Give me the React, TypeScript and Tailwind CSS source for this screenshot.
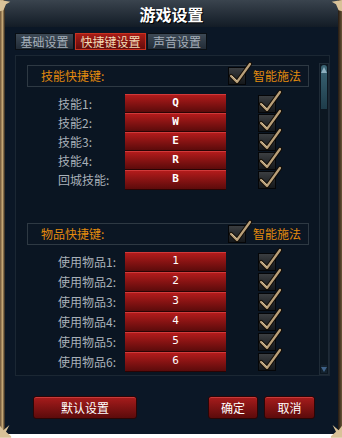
import React from "react";

function Check() {
  return (
    <div className="relative w-[18px] h-[18px] shrink-0 border border-[#050608] bg-gradient-to-b from-[#3b3e41] to-[#15181b]">
      <svg
        className="absolute left-[-3px] top-[-9px] overflow-visible"
        width="28"
        height="28"
        viewBox="0 0 28 28"
      >
        <path d="M5 17 L11 23 L24 5" fill="none" stroke="#120c05" strokeWidth="4.2" strokeLinecap="round" strokeLinejoin="round" />
        <path d="M5 17 L11 23 L24 5" fill="none" stroke="#b9a07a" strokeWidth="2.2" strokeLinecap="round" strokeLinejoin="round" />
        <path d="M6 17 L11 21.8" fill="none" stroke="#dcc8a2" strokeWidth="0.9" strokeLinecap="round" />
      </svg>
    </div>
  );
}

function Row({ label, k, h, mono }: { label: string; k: string; h: string; mono: string }) {
  return (
    <div className={`flex items-center pl-[42px] ${h}`}>
      <div className="w-[67px] text-[12px] leading-none text-[#a9b1b9]">{label}</div>
      <div className={`w-[101px] h-full flex items-center justify-center border-b border-[#2a0404] bg-gradient-to-b from-[#b81c1c] to-[#5c0b0b] shadow-[inset_0_1px_0_#d03a3a] font-['DejaVu_Sans_Mono',monospace] text-[11px] text-white ${mono}`}>
        {k}
      </div>
      <div className="ml-[32px]">
        <Check />
      </div>
    </div>
  );
}

function Header({ title }: { title: string }) {
  return (
    <div className="ml-[11px] w-[282px] h-[22px] border border-[#2e3943] bg-[#0b1623] flex items-center pl-[13px] pr-[7px]">
      <span className="text-[12px] leading-none text-[#e38b0e]">{title}</span>
      <div className="ml-auto">
        <Check />
      </div>
      <span className="ml-[7px] text-[12px] leading-none text-[#e38b0e]">智能施法</span>
    </div>
  );
}

export default function App() {
  const tabBase = "h-[17px] flex items-center justify-center text-[12px] leading-none border";
  return (
    <div className="w-[342px] h-[438px] bg-white relative font-['Noto_Sans_CJK_SC',sans-serif]">
      <div className="h-[434px] flex">
        <div className="w-[5px] bg-gradient-to-r from-[#6b5236] via-[#c4a674] to-[#2a2016]" />
        <div className="flex-1 flex flex-col bg-[#0b1726]">
          <div className="h-[27px] flex items-center justify-center bg-gradient-to-b from-[#3a444e] to-[#131c26]">
            <span className="text-[16px] font-bold leading-none text-white [text-shadow:1px_1px_0_#000]">游戏设置</span>
          </div>
          <div className="mt-[6px] pl-[10px] flex gap-[1px]">
            <div className={`${tabBase} w-[59px] border-[#0a0f14] bg-gradient-to-b from-[#3d4955] to-[#222c37] text-[#a5afb9]`}>基础设置</div>
            <div className={`${tabBase} w-[71px] border-[#c8321f] bg-gradient-to-b from-[#a81c16] to-[#620c0c] text-[#f2dcb6]`}>快捷键设置</div>
            <div className={`${tabBase} w-[60px] border-[#0a0f14] bg-gradient-to-b from-[#3d4955] to-[#222c37] text-[#a5afb9]`}>声音设置</div>
          </div>
          <div className="mt-[5px] ml-[10px] w-[315px] h-[321px] border border-[#1b2733] bg-[#0a1522] flex">
            <div className="flex-1 flex flex-col pt-[9px]">
              <Header title="技能快捷键:" />
              <div className="mt-[7px] flex flex-col">
                <Row label="技能1:" k="Q" h="h-[19px]" mono="font-bold" />
                <Row label="技能2:" k="W" h="h-[19px]" mono="font-bold" />
                <Row label="技能3:" k="E" h="h-[19px]" mono="font-bold" />
                <Row label="技能4:" k="R" h="h-[19px]" mono="font-bold" />
                <Row label="回城技能:" k="B" h="h-[20px]" mono="font-bold" />
              </div>
              <div className="mt-[33px]">
                <Header title="物品快捷键:" />
              </div>
              <div className="mt-[7px] flex flex-col">
                <Row label="使用物品1:" k="1" h="h-[20px]" mono="font-normal" />
                <Row label="使用物品2:" k="2" h="h-[20px]" mono="font-normal" />
                <Row label="使用物品3:" k="3" h="h-[20px]" mono="font-normal" />
                <Row label="使用物品4:" k="4" h="h-[20px]" mono="font-normal" />
                <Row label="使用物品5:" k="5" h="h-[20px]" mono="font-normal" />
                <Row label="使用物品6:" k="6" h="h-[20px]" mono="font-normal" />
              </div>
            </div>
            <div className="mt-[7px] w-[10px] border border-[#1f2b37] bg-[#0c1721] flex flex-col">
              <div className="h-[44px] mt-[1px] mx-[1px] rounded-t-[3px] bg-gradient-to-b from-[#3c6676] to-[#1e3c4a] flex justify-center pt-[2px]">
                <svg width="6" height="6" viewBox="0 0 6 6">
                  <path d="M3 0 L6 6 L0 6 Z" fill="#8fb0c0" />
                </svg>
              </div>
              <div className="mt-auto mb-[1px] mx-[1px] h-[8px] bg-[#14222e] flex justify-center items-center">
                <svg width="6" height="5" viewBox="0 0 6 5">
                  <path d="M0 0 L6 0 L3 5 Z" fill="#3f6288" />
                </svg>
              </div>
            </div>
          </div>
          <div className="mt-[20px] pl-[28px] flex items-center">
            <div className="w-[104px] h-[23px] rounded-[3px] border border-[#2a0606] bg-gradient-to-b from-[#a81c1c] to-[#5c0b0b] shadow-[inset_0_1px_0_#c83a3a] flex items-center justify-center text-[12px] leading-none text-white">默认设置</div>
            <div className="ml-[71px] w-[50px] h-[23px] rounded-[3px] border border-[#2a0606] bg-gradient-to-b from-[#a81c1c] to-[#5c0b0b] shadow-[inset_0_1px_0_#c83a3a] flex items-center justify-center text-[12px] leading-none text-white">确定</div>
            <div className="ml-[6px] w-[51px] h-[23px] rounded-[3px] border border-[#2a0606] bg-gradient-to-b from-[#a81c1c] to-[#5c0b0b] shadow-[inset_0_1px_0_#c83a3a] flex items-center justify-center text-[12px] leading-none text-white">取消</div>
          </div>
        </div>
        <div className="w-[4px] bg-gradient-to-r from-[#241a12] to-[#6b5638]" />
      </div>
      <svg className="absolute left-0 top-0" width="12" height="12" viewBox="0 0 14 14">
        <path d="M0 0 L12 2 L7 5 L4 12 L0 13 Z" fill="#d9c298" />
      </svg>
      <svg className="absolute right-0 top-0" width="12" height="12" viewBox="0 0 14 14">
        <path d="M14 0 L2 2 L7 5 L10 12 L14 13 Z" fill="#d9c298" />
      </svg>
      <svg className="absolute left-0 bottom-0" width="12" height="14" viewBox="0 0 14 16">
        <path d="M0 16 L0 2 L4 7 L11 1 L7 9 L13 14 L13 16 Z" fill="#d9c298" />
      </svg>
      <svg className="absolute right-0 bottom-0" width="12" height="14" viewBox="0 0 14 16">
        <path d="M14 16 L14 2 L10 7 L3 1 L7 9 L1 14 L1 16 Z" fill="#d9c298" />
      </svg>
    </div>
  );
}
